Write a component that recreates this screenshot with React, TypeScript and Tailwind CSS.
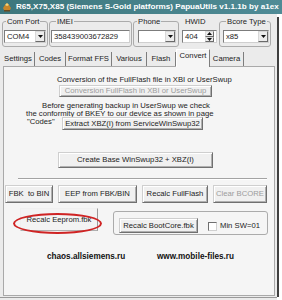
import type { ReactNode } from 'react'

const btn =
  'flex items-center justify-center bg-[#f0f0f0] border border-[#cfcfcf] border-r-[#707070] border-b-[#707070] shadow-[inset_1px_1px_0_#ffffff,inset_-1px_-1px_0_#b0b0b0] text-[7.7px] leading-none whitespace-nowrap'

function AppIcon() {
  return (
    <svg width="10" height="10" viewBox="0 0 10 10" className="ml-[2px] shrink-0">
      <path d="M1 6 L3 3 L5 1 L7 3 L9 6 L8 8 L2 8 Z" fill="#c8862a" />
      <path d="M3 3 L5 1 L7 3 L5 4 Z" fill="#f3d37a" />
      <rect x="2" y="8" width="6" height="1.5" fill="#6b4a1e" />
    </svg>
  )
}

function Arrow() {
  return (
    <svg width="5" height="3" viewBox="0 0 5 3">
      <path d="M0 0 H5 L2.5 3 Z" fill="#111" />
    </svg>
  )
}

function Combo({ value, className }: { value: string; className: string }) {
  return (
    <div className={`flex h-[13px] bg-white border border-[#7c7c7c] border-r-[#cfcfcf] border-b-[#cfcfcf] ${className}`}>
      <span className="flex-1 pl-[2px] leading-[11px] overflow-hidden">{value}</span>
      <span className="w-[10px] h-[11px] flex items-center justify-center bg-[#ececec] border border-[#d8d8d8] border-r-[#6a6a6a] border-b-[#6a6a6a]">
        <Arrow />
      </span>
    </div>
  )
}

function Group({ label, legendClass, className, children }: { label: string; legendClass: string; className: string; children: ReactNode }) {
  return (
    <fieldset className={`border border-[#ababab] rounded-[3px] px-[1px] pb-[3px] ${className}`}>
      <legend className={`px-[1px] leading-[9px] ${legendClass}`}>{label}</legend>
      {children}
    </fieldset>
  )
}

export default function App() {
  return (
    <div className="w-[282px] h-[300px] overflow-hidden bg-white font-['Liberation_Sans',Arial,sans-serif] text-[#1c1c1c] text-[7.7px] leading-[9px]">
      {/* Title bar */}
      <div className="h-[14px] flex items-center bg-linear-to-r from-[#3d777d] to-[#4f8b96] whitespace-nowrap overflow-hidden">
        <AppIcon />
        <span className="ml-[4px] text-white font-bold text-[8.1px] leading-none">
          R65,X75,X85 (Siemens S-Gold platforms) PapuaUtils v1.1.1b by a1ex
        </span>
      </div>

      <div className="flex h-[286px]">
        <div className="w-[277px] bg-[#ebebeb] flex flex-col">
          {/* Top settings */}
          <div className="h-[35px] flex items-start pl-[2px] pt-[3px]">
            <Group label="Com Port" legendClass="ml-[2px]" className="w-[46px]">
              <Combo value="COM4" className="mt-[4px] w-[42px]" />
            </Group>
            <Group label="IMEI" legendClass="ml-[5px]" className="ml-[1px] w-[83px]">
              <div className="mt-[4px] w-[79px] h-[13px] bg-white border border-[#7c7c7c] border-r-[#cfcfcf] border-b-[#cfcfcf] pl-[2px] leading-[11px]">
                358439003672829
              </div>
            </Group>
            <Group label="Phone" legendClass="ml-[2px]" className="ml-[1px] w-[46px]">
              <Combo value="" className="mt-[4px] ml-[3px] w-[38px]" />
            </Group>
            <div className="ml-[3px] w-[35px]">
              <div className="ml-[3px] leading-[9px]">HWID</div>
              <div className="mt-[4px] flex h-[13px] bg-white border border-[#7c7c7c] border-r-[#cfcfcf] border-b-[#cfcfcf]">
                <span className="flex-1 pl-[2px] leading-[11px]">404</span>
                <span className="w-[9px] flex flex-col mr-[2px]">
                  <span className="h-[5.5px] flex items-center justify-center bg-[#ececec] border border-[#d8d8d8] border-r-[#6a6a6a] border-b-[#6a6a6a]">
                    <svg width="5" height="3" viewBox="0 0 5 3"><path d="M0 3 H5 L2.5 0 Z" fill="#111" /></svg>
                  </span>
                  <span className="h-[5.5px] flex items-center justify-center bg-[#ececec] border border-[#d8d8d8] border-r-[#6a6a6a] border-b-[#6a6a6a]">
                    <Arrow />
                  </span>
                </span>
              </div>
            </div>
            <Group label="Bcore Type" legendClass="ml-[5px]" className="ml-[2px] w-[52px]">
              <Combo value="x85" className="mt-[4px] ml-[2px] w-[46px]" />
            </Group>
          </div>

          {/* Tabs */}
          <div className="h-[17px] flex items-end pl-[2px]">
            {[
              ['Settings', 'w-[33px]'],
              ['Codes', 'w-[31px]'],
              ['Format FFS', 'w-[46px]'],
              ['Various', 'w-[35px]'],
              ['Flash', 'w-[29px]'],
            ].map(([t, w]) => (
              <div key={t} className={`h-[14px] ${w} border-r border-[#7d7d7d] flex items-center justify-center pb-[1px]`}>
                {t}
              </div>
            ))}
            <div className="relative z-10 -mb-px h-[18px] w-[34px] bg-[#f5f5f5] border-t border-l border-white border-r border-r-[#7d7d7d] flex items-start justify-center pt-[1px]">
              Convert
            </div>
            <div className="h-[14px] w-[34px] border-r border-[#7d7d7d] flex items-center justify-center pb-[1px]">Camera</div>
          </div>

          {/* Tab page */}
          <div className="ml-[3px] w-[272px] h-[230px] border border-[#a9a9a9] bg-[#f5f5f5] flex flex-col">
            <div className="mt-[8px] ml-[53px]">Conversion of the FullFlash file in XBI or UserSwup</div>
            <button className={`${btn} mt-[1px] ml-[55px] w-[153px] h-[12px] text-[#9c9c9c]`}>
              Conversion FullFlash in XBI or UserSwup
            </button>
            <div className="mt-[4px] ml-[38px]">Before generating backup in UserSwup we check</div>
            <div className="ml-[22px] leading-[8px]">the conformity of BKEY to our device as shown in page</div>
            <div className="-mt-[1px] ml-[23px] flex items-start">
              <span className="w-[35px]">"Codes"</span>
              <button className={`${btn} w-[141px] h-[13px]`}>Extract XBZ(I) from ServiceWinSwup32</button>
            </div>
            <button className={`${btn} mt-[22px] ml-[54px] w-[155px] h-[16px]`}>Create Base WinSwup32 + XBZ(I)</button>
            <div className="mt-[10px] ml-[14px] w-[249px] h-[2px] border-t border-[#a3a3a3] border-b border-b-white" />
            <div className="mt-[5px] ml-[1px] flex">
              <button className={`${btn} w-[48px] h-[18px]`}>FBK&nbsp; to BIN</button>
              <button className={`${btn} ml-[5px] w-[79px] h-[18px]`}>EEP from FBK/BIN</button>
              <button className={`${btn} ml-[5px] w-[66px] h-[18px]`}>Recalc FullFlash</button>
              <button className={`${btn} ml-[5px] w-[54px] h-[18px] text-[#9c9c9c]`}>Clear BCORE</button>
            </div>
            <div className="mt-[8px] flex items-start">
              <div className="relative w-[105px] h-[24px]">
                <button className="-mt-[3px] ml-[16px] w-[78px] h-[23px] flex items-center justify-center bg-[#f3f3f3] border border-[#f0f0f0] border-r-[#9a9a9a] border-b-[#b0b0b0] text-[7.7px] leading-none whitespace-nowrap">
                  Recalc Eeprom.fbk
                </button>
                <div className="absolute left-[9px] top-[2px] w-[89px] h-[21px] rounded-[50%] border-2 border-[#cf2424]" />
              </div>
              <div className="ml-[4px] w-[155px] h-[24px] border border-[#ababab] rounded-[3px] flex items-start pl-[5px] pt-[6px]">
                <button className={`${btn} w-[79px] h-[15px]`}>Recalc BootCore.fbk</button>
                <span className="ml-[10px] mt-[4px] w-[9px] h-[9px] bg-white border border-[#6f6f6f] border-r-[#d0d0d0] border-b-[#d0d0d0]" />
                <span className="ml-[3px] mt-[3px]">Min SW=01</span>
              </div>
            </div>
            <div className="mt-[17px] ml-[43px] flex font-bold text-[8.2px] text-[#111]">
              <span className="w-[110px]">chaos.allsiemens.ru</span>
              <span>www.mobile-files.ru</span>
            </div>
          </div>

          <div className="mt-[1px] h-[3px] border-t border-[#9a9a9a]" />
        </div>
        <div className="w-[2px] mt-[3px] h-[280px] bg-[#3f3f3f]" />
        <div className="flex-1 bg-white" />
      </div>
    </div>
  )
}
